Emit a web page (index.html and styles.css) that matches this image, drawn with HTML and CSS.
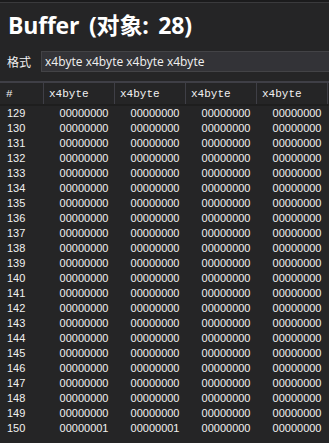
FILE: index.html
```html
<!DOCTYPE html>
<html lang="zh">
<head>
    <meta charset="UTF-8">
    <title>Buffer</title>
    <link rel="stylesheet" href="styles.css">
</head>
<body>
    <div class="panel">
        <h1>Buffer (对象: 28)</h1>
        <div class="format-row">
            <label for="fmt">格式</label>
            <input type="text" id="fmt" value="x4byte x4byte x4byte x4byte">
        </div>
        <div class="grid-wrap">
            <table class="grid">
                <thead>
                    <tr>
                        <th class="idx">#</th>
                        <th>x4byte</th>
                        <th>x4byte</th>
                        <th>x4byte</th>
                        <th>x4byte</th>
                        <th class="rest"></th>
                    </tr>
                </thead>
                <tbody id="rows"></tbody>
            </table>
        </div>
    </div>
    <script>
        const rows = document.getElementById('rows');
        for (let i = 129; i <= 150; i++) {
            const tr = document.createElement('tr');
            const last = i === 150;
            const vals = [last ? '00000001' : '00000000', last ? '00000001' : '00000000', '00000000', '00000000'];
            tr.innerHTML = `<td class="idx">${i}</td>` + vals.map(v => `<td>${v}</td>`).join('') + '<td class="rest"></td>';
            rows.appendChild(tr);
        }
    </script>
</body>
</html>
```
FILE: styles.css
```css
body {
    margin: 0;
    background-color: #252526;
    color: #f1f1f1;
    font-family: "Liberation Sans", Arial, "Noto Sans CJK SC", sans-serif;
    overflow: hidden;
}
.panel {
    border-top: 2px solid #1b1b1c;
    box-shadow: inset 0 1px 0 #3a3a3c;
    padding-top: 6px;
    overflow: hidden;
}
h1 {
    margin: 0 0 0 8px;
    font-family: "Open Sans", "Noto Sans CJK SC", sans-serif;
    font-size: 23px;
    font-weight: bold;
    line-height: 34px;
    color: #ffffff;
    letter-spacing: -0.2px;
    word-spacing: 4px;
    white-space: nowrap;
}
.format-row {
    display: flex;
    align-items: center;
    margin-top: 9px;
    padding-bottom: 9px;
    border-bottom: 2px solid #3f3f46;
}
.format-row label {
    width: 41px;
    padding-left: 7px;
    box-sizing: border-box;
    font-size: 12px;
    font-family: "Noto Sans CJK SC", sans-serif;
    color: #f1f1f1;
}
.format-row input {
    flex: 1;
    min-width: 0;
    height: 21px;
    box-sizing: border-box;
    margin-right: -10px;
    background-color: #333337;
    border: 1px solid #434346;
    color: #f1f1f1;
    font-family: "Open Sans", sans-serif;
    font-size: 12px;
    padding: 0 3px;
    outline: none;
}
.grid-wrap {
    overflow: hidden;
}
.grid {
    border-collapse: collapse;
    table-layout: fixed;
    width: 329px;
}
.grid th {
    height: 21px;
    padding: 0 0 0 5px;
    text-align: left;
    font-family: "Liberation Mono", monospace;
    font-weight: normal;
    font-size: 11px;
    color: #f1f1f1;
    border-right: 1px solid #3f3f46;
    border-bottom: 2px solid #1e1e1e;
    width: 65px;
}
.grid th.idx {
    width: 37px;
    padding-left: 6px;
}
.grid th.rest {
    width: auto;
    padding: 0;
    border-right: none;
}
.grid td {
    height: 15px;
    padding: 0 6px 0 0;
    text-align: right;
    font-size: 11px;
    line-height: 15px;
    color: #f1f1f1;
}
.grid td.idx {
    text-align: left;
    padding-left: 7px;
}
.grid td.rest {
    padding: 0;
}
```
